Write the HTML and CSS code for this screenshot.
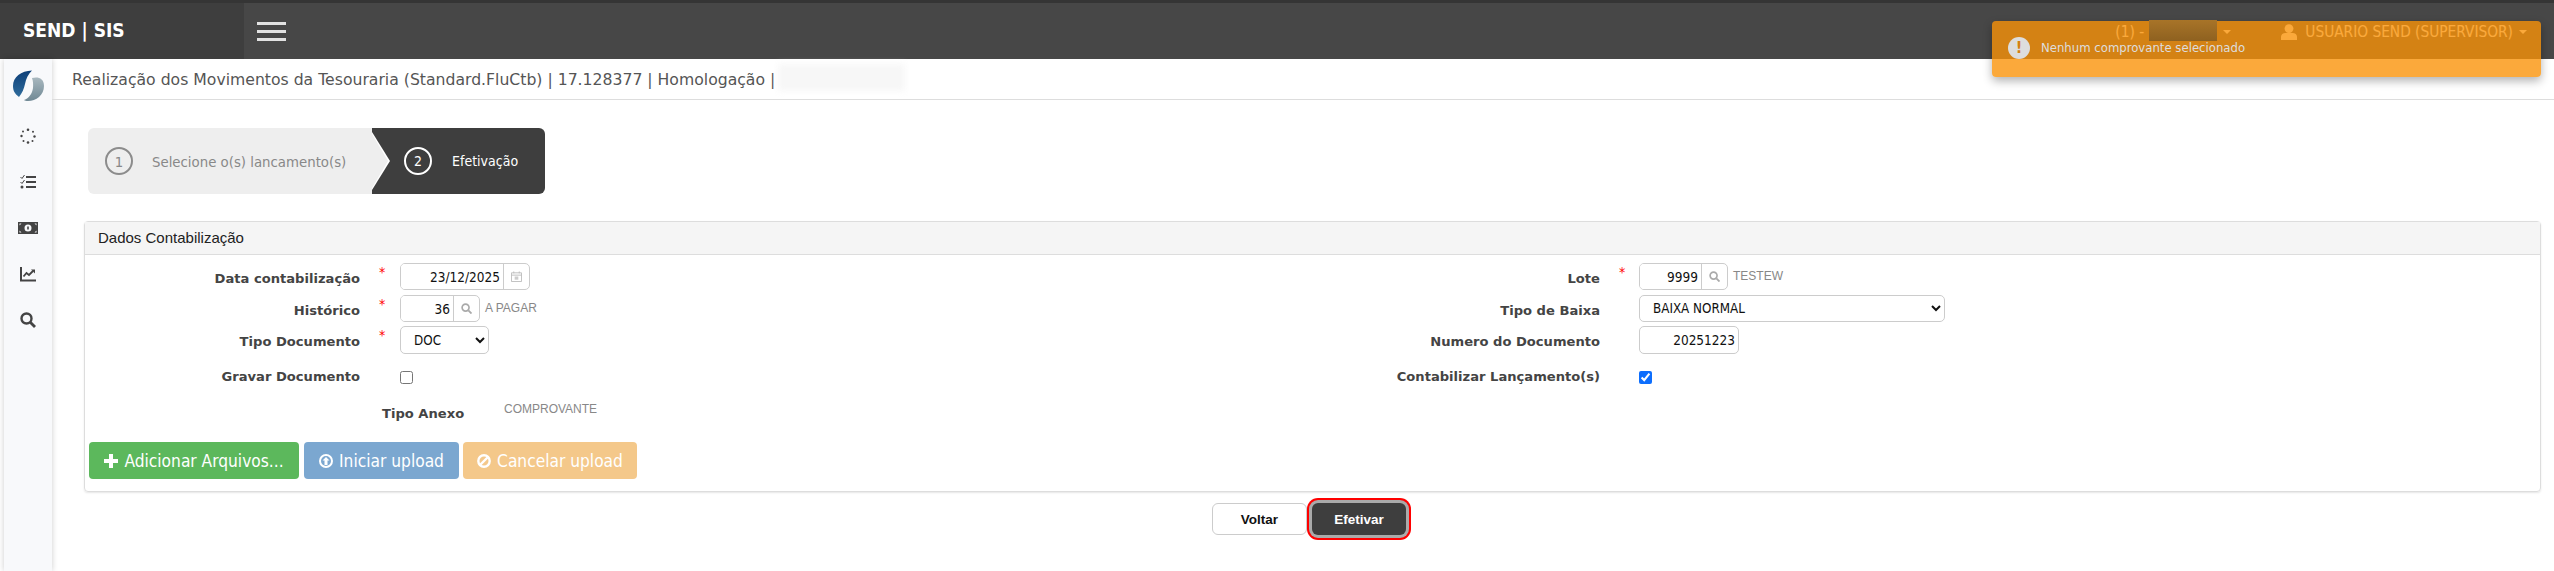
FILE: index.html
```html
<!DOCTYPE html>
<html lang="pt-BR">
<head>
    <meta charset="UTF-8">
    <title>SEND | SIS</title>
    <link rel="stylesheet" href="styles.css">
</head>
<body>
    <header class="topbar">
        <div class="brand">SEND | SIS</div>
        <button class="menu-toggle"><span></span><span></span><span></span></button>
        <div class="top-user">
            <span class="company">(1) -</span>
            <span class="caret caret-company"></span>
            <svg class="user-icon" viewBox="0 0 16 16"><circle cx="8" cy="4.600" r="4.400"/><path d="M0 16v-3c0-2.600 2-4 4.500-4h7c2.500 0 4.500 1.400 4.500 4v3z"/></svg>
            <span class="user-name">USUARIO SEND (SUPERVISOR)</span>
            <span class="caret"></span>
        </div>
    </header>

    <div class="layout">
        <nav class="sidebar">
            <svg class="logo" viewBox="0 0 31 31">
                <defs>
                    <linearGradient id="logoBlue" x1="0" y1="0" x2="0" y2="1"><stop offset="0" stop-color="#0d3f78"/><stop offset="1" stop-color="#2f6c9c"/></linearGradient>
                    <linearGradient id="logoGrey" x1="0" y1="0" x2="0" y2="1"><stop offset="0" stop-color="#a9b8bf"/><stop offset="1" stop-color="#6f8894"/></linearGradient>
                </defs>
                <path d="M19 .5C8 1 0 7 0 16c0 5 2 8 6 11 3-4 5-8 6-13 1-5 3-10 7-13.500z" fill="url(#logoBlue)"/>
                <path d="M19 8c6-1.500 12 0 12 8 0 9-8 15-16 15-2 0-3-.3-4-1 5-2 8-6 9-12 .3-3 .2-7-1-10z" fill="url(#logoGrey)"/>
            </svg>
            <svg class="side-icon" viewBox="0 0 16 16"><g fill="#444"><circle cx="8" cy="1.800" r="1.300"/><circle cx="13" cy="3.800" r="1"/><circle cx="14.500" cy="8.500" r="1.200"/><circle cx="12.500" cy="13" r="1"/><circle cx="8" cy="14.500" r="1.300"/><circle cx="3.500" cy="13" r="1"/><circle cx="1.500" cy="8" r="1.200"/><circle cx="3" cy="3.500" r="1"/></g></svg>
            <svg class="side-icon" viewBox="0 0 16 16"><path d="M6 3h10M6 8h10M6 13h10" stroke="#444" stroke-width="2"/><path d="M.5 3l1.500 1.500L4.500 1M.5 8L2 9.500 4.500 6" stroke="#444" stroke-width="1" fill="none"/><circle cx="2" cy="13" r="1.500" fill="#444"/></svg>
            <svg class="side-icon side-icon-wide" viewBox="0 0 20 12"><path fill="#444" fill-rule="evenodd" d="M0 0h20v12H0zM10 2.500a3.500 3.500 0 100 7 3.500 3.500 0 000-7zM1.500 1.500v2l2-2zM18.500 1.500h-2l2 2zM1.500 10.500h2l-2-2zM18.500 10.500v-2l-2 2z"/><rect x="9.200" y="4.500" width="1.600" height="3" fill="#444"/></svg>
            <svg class="side-icon" viewBox="0 0 16 16"><path d="M1 1v13.500h15" stroke="#444" stroke-width="2" fill="none"/><path d="M3.500 10.500l3-3.500 2.500 2 4-4" stroke="#444" stroke-width="1.800" fill="none"/><path d="M11 3.500h4v4z" fill="#444"/></svg>
            <svg class="side-icon" viewBox="0 0 16 16"><circle cx="6.500" cy="6.500" r="5" stroke="#444" stroke-width="2.400" fill="none"/><path d="M10.500 10.500l4.500 4.500" stroke="#444" stroke-width="2.800"/></svg>
        </nav>

        <main class="content">
            <div class="page-title">Realização dos Movimentos da Tesouraria (Standard.FluCtb) | 17.128377 | Homologação |</div>

            <div class="page-body">
                <div class="steps">
                    <div class="step step-done">
                        <span class="step-num">1</span>
                        <span>Selecione o(s) lancamento(s)</span>
                    </div>
                    <div class="step step-active">
                        <span class="step-num">2</span>
                        <span>Efetivação</span>
                    </div>
                </div>

                <section class="panel">
                    <div class="panel-heading">Dados Contabilização</div>
                    <div class="form-cols">
                        <div class="form-col">
                            <div class="row row-a">
                                <label>Data contabilização</label><span class="req">*</span>
                                <div class="field"><div class="group group-date"><input type="text" value="23/12/2025" readonly><span class="addon"><svg viewBox="0 0 12 12"><path fill="none" stroke="#bbb" d="M.5 2h11v9.500H.5zM.5 4.500h11M3 .5v2M9 .5v2"/><rect x="4" y="6" width="4" height="3.500" fill="#ccc"/></svg></span></div></div>
                            </div>
                            <div class="row row-b">
                                <label>Histórico</label><span class="req">*</span>
                                <div class="field"><div class="group group-code"><input type="text" value="36" readonly><span class="addon"><svg viewBox="0 0 12 12"><circle cx="5" cy="5" r="3.800" fill="none" stroke="#aaa" stroke-width="1.800"/><path d="M8 8l3.500 3.500" stroke="#aaa" stroke-width="2"/></svg></span></div><span class="hint">A PAGAR</span></div>
                            </div>
                            <div class="row row-c">
                                <label>Tipo Documento</label><span class="req">*</span>
                                <div class="field"><select class="select-doc"><option>DOC</option></select></div>
                            </div>
                            <div class="row row-d">
                                <label>Gravar Documento</label><span></span>
                                <div class="field"><input type="checkbox"></div>
                            </div>
                        </div>
                        <div class="form-col form-col-right">
                            <div class="row row-a">
                                <label>Lote</label><span class="req">*</span>
                                <div class="field"><div class="group group-lote"><input type="text" value="9999" readonly><span class="addon"><svg viewBox="0 0 12 12"><circle cx="5" cy="5" r="3.800" fill="none" stroke="#aaa" stroke-width="1.800"/><path d="M8 8l3.500 3.500" stroke="#aaa" stroke-width="2"/></svg></span></div><span class="hint">TESTEW</span></div>
                            </div>
                            <div class="row row-b">
                                <label>Tipo de Baixa</label><span></span>
                                <div class="field"><select class="select-baixa"><option>BAIXA NORMAL</option></select></div>
                            </div>
                            <div class="row row-c">
                                <label>Numero do Documento</label><span></span>
                                <div class="field"><input class="input-num" type="text" value="20251223" readonly></div>
                            </div>
                            <div class="row row-d">
                                <label>Contabilizar Lançamento(s)</label><span></span>
                                <div class="field"><input type="checkbox" checked></div>
                            </div>
                        </div>
                    </div>

                    <div class="anexo">
                        <strong>Tipo Anexo</strong>
                        <span>COMPROVANTE</span>
                    </div>

                    <div class="upload-actions">
                        <button class="btn btn-add"><svg viewBox="0 0 14 14"><path d="M5 0h4v5h5v4H9v5H5V9H0V5h5z" fill="#fff"/></svg>Adicionar Arquivos...</button>
                        <button class="btn btn-start"><svg viewBox="0 0 14 14"><path fill="#fff" fill-rule="evenodd" d="M7 0a7 7 0 110 14A7 7 0 017 0zM7 2a5 5 0 100 10A5 5 0 007 2zM7 3l3.500 3.500H8.500V11h-3V6.500h-2z"/></svg>Iniciar upload</button>
                        <button class="btn btn-cancel"><svg viewBox="0 0 14 14"><circle cx="7" cy="7" r="5.700" fill="none" stroke="#fff" stroke-width="2.400"/><path d="M3 11l8-8" stroke="#fff" stroke-width="2.400"/></svg>Cancelar upload</button>
                    </div>
                </section>

                <div class="page-actions">
                    <button class="btn-back">Voltar</button>
                    <button class="btn-confirm">Efetivar</button>
                </div>
            </div>
        </main>
    </div>

    <!-- aviso por cima do cabecalho -->
    <div class="toast">
        <span class="toast-icon">!</span>
        <span class="toast-text">Nenhum comprovante selecionado</span>
    </div>
    <div class="redact redact-company"></div>
    <div class="redact redact-title"></div>
</body>
</html>
```

FILE: styles.css
```css
html, body {
    margin: 0;
    height: 100%;
    overflow: hidden;
}

body {
    font-family: "DejaVu Sans", sans-serif;
    font-stretch: condensed;
    background-color: #fff;
    color: #333;
}

.topbar {
    height: 56px;
    border-top: 3px solid #353535;
    background-color: #474747;
    display: flex;
    align-items: center;
    color: #fff;
}

.brand {
    width: 221px;
    height: 100%;
    padding-left: 23px;
    background-color: #3e3e3e;
    font-size: 19px;
    font-weight: bold;
    line-height: 54px;
}

.menu-toggle {
    width: 29px;
    height: 19px;
    margin-left: 13px;
    padding: 0;
    border: none;
    background: none;
    display: flex;
    flex-direction: column;
    justify-content: space-between;
}

.menu-toggle span {
    display: block;
    height: 3px;
    background-color: #e2e2e2;
}

.top-user {
    margin-left: auto;
    margin-right: 27px;
    margin-top: 2px;
    display: flex;
    align-items: center;
    font-size: 15.300px;
}

.company {
    width: 108px;
}

.caret {
    width: 0;
    height: 0;
    margin-left: 6px;
    border-left: 4px solid transparent;
    border-right: 4px solid transparent;
    border-top: 4px solid #fff;
}

.caret-company {
    margin-left: 0;
}

.user-icon {
    width: 16px;
    height: 16px;
    margin-left: 50px;
    margin-right: 8px;
    fill: #fff;
}

.layout {
    display: flex;
    height: 512px;
}

.sidebar {
    width: 48px;
    flex-shrink: 0;
    margin-left: 4px;
    background-color: #f8f9fb;
    box-shadow: 0 0 6px rgba(0, 0, 0, 0.2);
    display: flex;
    flex-direction: column;
    align-items: center;
    padding-top: 11px;
    box-sizing: border-box;
}

.logo {
    width: 31px;
    height: 31px;
    margin-bottom: 27px;
}

.side-icon {
    width: 16px;
    height: 16px;
    margin-bottom: 30px;
}

.side-icon-wide {
    width: 20px;
}

.content {
    flex: 1;
    min-width: 0;
}

.page-title {
    height: 40px;
    padding-left: 20px;
    border-bottom: 1px solid #ddd;
    font-size: 15.660px;
    font-stretch: normal;
    line-height: 41px;
    color: #555;
}

.page-body {
    padding: 28px 13px 0 32px;
}

.steps {
    display: flex;
    width: 457px;
    height: 66px;
    margin-left: 4px;
    border-radius: 6px;
    overflow: hidden;
    font-size: 14px;
}

.step {
    display: flex;
    align-items: center;
    position: relative;
}

.step-num {
    width: 24px;
    height: 24px;
    border: 2px solid #8c8c8c;
    border-radius: 50%;
    display: flex;
    align-items: center;
    justify-content: center;
}

.step-done {
    width: 284px;
    padding-left: 17px;
    box-sizing: border-box;
    gap: 19px;
    background-color: #eee;
    color: #888;
    font-size: 14.800px;
}

.step-active {
    flex: 1;
    padding-left: 32px;
    gap: 20px;
    background-color: #3e3e3e;
    color: #fff;
}

.step-active .step-num {
    border-color: #fff;
}

/* seta entre os passos */
.step-active::before {
    content: "";
    position: absolute;
    left: 0;
    top: 4px;
    width: 18px;
    height: 58px;
    background-color: #fff;
    clip-path: polygon(0 0, 100% 50%, 0 100%);
}

.step-active::after {
    content: "";
    position: absolute;
    left: 0;
    top: 6px;
    width: 16px;
    height: 54px;
    background-color: #eee;
    clip-path: polygon(0 0, 100% 50%, 0 100%);
}

.panel {
    height: 271px;
    margin-top: 27px;
    border: 1px solid #ddd;
    border-radius: 4px;
    box-shadow: 0 1px 2px rgba(0, 0, 0, 0.1);
    box-sizing: border-box;
}

.panel-heading {
    height: 32px;
    padding-left: 13px;
    border-bottom: 1px solid #ddd;
    background-color: #f5f5f5;
    font-family: "Liberation Sans", sans-serif;
    font-size: 15px;
    line-height: 31px;
    color: #222;
}

.form-cols {
    display: grid;
    grid-template-columns: 1228px 1fr;
    padding-top: 8px;
}

.row {
    display: grid;
    grid-template-columns: 275px 40px 1fr;
}

.form-col-right .row {
    grid-template-columns: 287px 39px 1fr;
}

.row-a {
    height: 32px;
}

.row-b {
    height: 31px;
}

.row-c {
    height: 43px;
}

.row-d {
    height: 30px;
}

.row label {
    text-align: right;
    font-size: 13.100px;
    font-weight: bold;
    font-stretch: normal;
    color: #444;
    padding-top: 8px;
}

.row-d label {
    padding-top: 0;
}

.req {
    padding-left: 19px;
    color: #f00;
    font-size: 14px;
    line-height: 18px;
}

.field {
    display: flex;
    align-items: flex-start;
}

.group {
    display: flex;
    height: 27px;
    box-sizing: border-box;
    border: 1px solid #ccc;
    border-radius: 5px;
    overflow: hidden;
}

.group input {
    flex: 1;
    min-width: 0;
    border: none;
    outline: none;
}

.group-date {
    width: 130px;
}

.group-code {
    width: 80px;
}

.group-lote {
    width: 89px;
}

input[type="text"] {
    padding: 0 3px;
    text-align: right;
    font-family: inherit;
    font-stretch: condensed;
    font-size: 13.500px;
    color: #111;
}

.addon {
    width: 25px;
    border-left: 1px solid #ccc;
    display: flex;
    align-items: center;
    justify-content: center;
}

.addon svg {
    width: 11px;
    height: 11px;
}

.hint {
    margin: 6px 0 0 5px;
    font-family: "Liberation Sans", sans-serif;
    font-size: 12px;
    color: #888;
}

select {
    height: 28px;
    padding-left: 9px;
    border: 1px solid #ccc;
    border-radius: 5px;
    background-color: #fff;
    font-family: inherit;
    font-stretch: condensed;
    font-size: 13.300px;
    color: #111;
}

.select-doc {
    width: 89px;
}

.select-baixa {
    width: 306px;
    height: 27px;
}

.input-num {
    width: 100px;
    height: 28px;
    box-sizing: border-box;
    border: 1px solid #ccc;
    border-radius: 5px;
    padding-right: 9px;
}

input[type="checkbox"] {
    width: 13px;
    height: 13px;
    margin: 2px 0 0;
    accent-color: #0d6efd;
}

.anexo {
    display: flex;
    height: 43px;
    padding-left: 297px;
    font-size: 13.100px;
    font-stretch: normal;
    color: #444;
}

.anexo strong {
    width: 122px;
    padding-top: 7px;
}

.anexo span {
    font-family: "Liberation Sans", sans-serif;
    font-size: 12px;
    color: #888;
    padding-top: 3px;
}

.upload-actions {
    display: flex;
    gap: 4px;
    padding-left: 4px;
}

.btn {
    height: 37px;
    padding: 0;
    border: none;
    border-radius: 4px;
    color: #fff;
    font-family: inherit;
    font-stretch: condensed;
    font-size: 17.200px;
    display: flex;
    align-items: center;
    justify-content: center;
    gap: 6px;
}

.btn svg {
    width: 14px;
    height: 14px;
}

.btn-add {
    width: 210px;
    background-color: #5cb85c;
}

.btn-start {
    width: 155px;
    margin-left: 1px;
    background-color: #7ba7d0;
}

.btn-cancel {
    width: 174px;
    background-color: #f4c88a;
}

.page-actions {
    display: flex;
    justify-content: center;
    align-items: flex-start;
    margin-top: 11px;
    padding-right: 7px;
    font-family: "Liberation Sans", sans-serif;
}

.page-actions button {
    height: 32px;
    font-family: inherit;
    font-size: 13.500px;
    font-weight: bold;
    border-radius: 6px;
}

.btn-back {
    width: 95px;
    border: 1px solid #ccc;
    background-color: #fff;
    color: #111;
}

.btn-confirm {
    width: 94px;
    margin-left: 5px;
    border: none;
    background-color: #3e3e3e;
    color: #fff;
    box-shadow: 0 0 0 3px #aaa, 0 0 0 5px #f00;
}

.toast {
    position: absolute;
    left: 1992px;
    top: 21px;
    width: 549px;
    height: 56px;
    border-radius: 4px;
    background-color: rgba(250, 147, 7, 0.794);
    box-shadow: 0 4px 10px rgba(0, 0, 0, 0.3);
}

.toast-icon {
    position: absolute;
    left: 16px;
    top: 16px;
    width: 22px;
    height: 22px;
    border-radius: 50%;
    background-color: #ddd;
    color: #d5800f;
    font-size: 16px;
    font-weight: bold;
    line-height: 22px;
    text-align: center;
}

.toast-text {
    position: absolute;
    left: 49px;
    top: 19px;
    font-size: 13px;
    color: #ddd;
}

.redact {
    position: absolute;
}

.redact-company {
    left: 2149px;
    top: 20px;
    width: 68px;
    height: 21px;
    background: linear-gradient(#a87428, #8e6120);
}

.redact-title {
    left: 778px;
    top: 64px;
    width: 127px;
    height: 27px;
    background-color: #f7f7f7;
    filter: blur(3px);
}
```
